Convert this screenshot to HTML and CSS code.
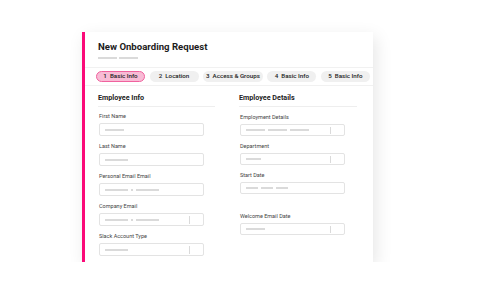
FILE: index.html
```html
<!DOCTYPE html>
<html lang="en">
  <head>
    <meta charset="UTF-8" />
    <meta name="viewport" content="width=device-width, initial-scale=1.0" />
    <title>New Onboarding Request</title>
    <link rel="stylesheet" href="styles.css">
  </head>
  <body>
    <div class="card">
      <!-- Header -->
      <div class="card-header">
        <h1>New Onboarding Request</h1>
        <div class="subline">
          <span class="bar w19"></span>
          <span class="bar w19"></span>
        </div>
      </div>

      <!-- Steps -->
      <div class="steps">
        <span class="step active">1&nbsp;&nbsp;Basic Info</span>
        <span class="step">2&nbsp;&nbsp;Location</span>
        <span class="step">3&nbsp;&nbsp;Access &amp; Groups</span>
        <span class="step">4&nbsp;&nbsp;Basic Info</span>
        <span class="step">5&nbsp;&nbsp;Basic Info</span>
      </div>

      <!-- Form columns -->
      <div class="form-body">
        <div class="column">
          <h2>Employee Info</h2>
          <div class="field">
            <label>First Name</label>
            <div class="input"><span class="bar w19"></span></div>
          </div>
          <div class="field">
            <label>Last Name</label>
            <div class="input"><span class="bar w23"></span></div>
          </div>
          <div class="field">
            <label>Personal Email Email</label>
            <div class="input">
              <span class="bar w23"></span><span class="dot"></span><span class="bar w23"></span>
            </div>
          </div>
          <div class="field">
            <label>Company Email</label>
            <div class="input select">
              <span class="bar w23"></span><span class="dot"></span><span class="bar w23"></span>
            </div>
          </div>
          <div class="field">
            <label>Slack Account Type</label>
            <div class="input select"><span class="bar w23"></span></div>
          </div>
        </div>

        <div class="column details">
          <h2>Employee Details</h2>
          <div class="field">
            <label>Employment Details</label>
            <div class="input select">
              <span class="bar w19"></span><span class="bar w19"></span><span class="bar w19"></span>
            </div>
          </div>
          <div class="field">
            <label>Department</label>
            <div class="input select"><span class="bar w15"></span></div>
          </div>
          <div class="field">
            <label>Start Date</label>
            <div class="input">
              <span class="bar w12"></span><span class="bar w12"></span><span class="bar w12"></span>
            </div>
          </div>
          <div class="field spaced">
            <label>Welcome Email Date</label>
            <div class="input select"><span class="bar w19"></span></div>
          </div>
        </div>
      </div>
    </div>
  </body>
</html>
```

FILE: styles.css
```css
body {
  margin: 0;
  background: #fff;
  font-family: Roboto, "Liberation Sans", sans-serif;
  color: #222;
}
.card {
  margin: 32px 0 0 82px;
  width: 288px;
  height: 230px;
  background: #fff;
  border-left: 3px solid #fb0a78;
  box-shadow: 3px 5px 16px rgba(0, 0, 0, 0.1);
}
.card-header {
  padding: 9px 0 8px 13px;
  border-bottom: 1px solid #f1f1f1;
}
h1 {
  margin: 0;
  font-size: 9.6px;
  line-height: 12px;
  font-weight: 700;
  color: #1c1c1c;
}
.subline {
  display: flex;
  gap: 2px;
  margin-top: 4px;
  height: 2px;
}
.bar {
  display: inline-block;
  height: 2px;
  background: #dadada;
}
.w12 { width: 12px; }
.w15 { width: 15px; }
.w19 { width: 19px; }
.w23 { width: 23px; }
.steps {
  display: flex;
  gap: 4.5px;
  padding: 3px 0 3px 11px;
  border-bottom: 1px solid #f1f1f1;
}
.step {
  box-sizing: border-box;
  min-width: 49px;
  height: 11px;
  padding: 0 3px;
  border-radius: 6px;
  background: #f0f0f0;
  font-size: 6.2px;
  line-height: 11px;
  font-weight: 500;
  text-align: center;
  color: #222;
  white-space: nowrap;
}
.step.active {
  background: #f8bbd5;
  border: 1px solid #f0629e;
  line-height: 9px;
}
.form-body {
  display: grid;
  grid-template-columns: 117px 118px;
  gap: 24px;
  padding: 7px 0 0 13px;
}
h2 {
  margin: 0 0 5px;
  padding-bottom: 3px;
  font-size: 7.2px;
  line-height: 10px;
  font-weight: 700;
  color: #222;
  border-bottom: 1px solid #eeeeee;
}
.field {
  margin-bottom: 6px;
}
.details h2 {
  margin-bottom: 6px;
}
.details .input {
  height: 12px;
}
.field.spaced {
  margin-top: 18px;
}
label {
  display: block;
  margin-bottom: 3px;
  padding-left: 1px;
  font-size: 5.5px;
  line-height: 8px;
  color: #444;
}
.input {
  box-sizing: border-box;
  display: flex;
  align-items: center;
  gap: 3px;
  width: 105px;
  height: 13px;
  margin-left: 1px;
  padding-left: 5px;
  border: 1px solid #e3e3e3;
  border-radius: 2px;
  position: relative;
}
.input.select::after {
  content: "";
  position: absolute;
  right: 13px;
  top: 2px;
  bottom: 1px;
  width: 1px;
  background: #dadada;
}
.dot {
  width: 2px;
  height: 2px;
  background: #dadada;
}
```
